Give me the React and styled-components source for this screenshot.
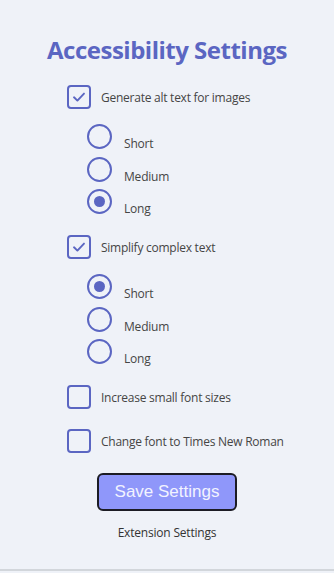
import React, {useState} from 'react';
import styled, {createGlobalStyle} from 'styled-components';

const Color = {
    PRIMARY: '#5b66c2',
    BG: '#eff2f8',
    TEXT: '#454545',
    BUTTON: '#8f97fa',
};

function App () {

    const [altText, setAltText] = useState(true);
    const [altLength, setAltLength] = useState('long');
    const [simplify, setSimplify] = useState(true);
    const [simplifyLength, setSimplifyLength] = useState('short');
    const [bigFont, setBigFont] = useState(false);
    const [times, setTimes] = useState(false);

    const lengths = [['short', 'Short'], ['medium', 'Medium'], ['long', 'Long']];

    return (
        <Container>
            <GlobalStyle/>
            <Title>Accessibility Settings</Title>
            <Options>
                <Check checked={altText} onClick={() => setAltText(!altText)} label="Generate alt text for images"/>
                <RadioGroup>
                    {lengths.map(([value, label]) => (
                        <Radio key={value}
                               checked={altLength === value}
                               onClick={() => setAltLength(value)}
                               label={label}
                        />
                    ))}
                </RadioGroup>
                <Check checked={simplify} onClick={() => setSimplify(!simplify)} label="Simplify complex text"/>
                <RadioGroup>
                    {lengths.map(([value, label]) => (
                        <Radio key={value}
                               checked={simplifyLength === value}
                               onClick={() => setSimplifyLength(value)}
                               label={label}
                        />
                    ))}
                </RadioGroup>
                <Check checked={bigFont} onClick={() => setBigFont(!bigFont)} label="Increase small font sizes"/>
                <Check checked={times} onClick={() => setTimes(!times)} label="Change font to Times New Roman" spaced/>
            </Options>
            <SaveButton>Save Settings</SaveButton>
            <Footer>Extension Settings</Footer>
        </Container>
    )
}

function Check ({checked, onClick, label, spaced}) {
    return (
        <CheckRow onClick={onClick} $spaced={spaced}>
            <Box>
                {checked && (
                    <svg width="16" height="16" viewBox="0 0 16 16">
                        <path d="M3 8.3 L6.4 11.6 L13 4.6" fill="none" stroke={Color.PRIMARY} strokeWidth="1.9"
                              strokeLinecap="round" strokeLinejoin="round"/>
                    </svg>
                )}
            </Box>
            <Label>{label}</Label>
        </CheckRow>
    )
}

function Radio ({checked, onClick, label}) {
    return (
        <RadioRow onClick={onClick}>
            <Circle>{checked && <Dot/>}</Circle>
            <RadioLabel>{label}</RadioLabel>
        </RadioRow>
    )
}

const GlobalStyle = createGlobalStyle`
    html, body {
        margin: 0;
        padding: 0;
        background: ${Color.BG};
    }
`;
const Container = styled.div`
    width: 334px;
    height: 571px;
    box-sizing: border-box;
    border-bottom: 2px solid #d2d6db;
    background: ${Color.BG};
    display: flex;
    flex-direction: column;
    align-items: center;
    padding-top: 35px;
    font-family: "Open Sans", "Noto Sans", sans-serif;
`;
const Title = styled.h1`
    margin: 0;
    font-size: 24px;
    font-weight: 700;
    line-height: 30px;
    color: ${Color.PRIMARY};
    letter-spacing: -0.5px;
`;
const Options = styled.div`
    align-self: stretch;
    display: flex;
    flex-direction: column;
    padding-left: 67px;
    margin-top: 20px;
`;
const CheckRow = styled.div`
    display: flex;
    align-items: center;
    gap: 10px;
    height: 24px;
    margin-top: ${props => props.$spaced ? '20px' : '0'};
    cursor: pointer;
`;
const Box = styled.div`
    width: 24px;
    height: 24px;
    flex-shrink: 0;
    box-sizing: border-box;
    border: 2px solid ${Color.PRIMARY};
    border-radius: 4px;
    display: flex;
    align-items: center;
    justify-content: center;
`;
const Label = styled.span`
    font-size: 12px;
    color: ${Color.TEXT};
    letter-spacing: -0.25px;
`;
const RadioGroup = styled.div`
    display: flex;
    flex-direction: column;
    gap: 8.5px;
    padding-left: 20px;
    margin: 15px 0 22px;
`;
const RadioRow = styled.div`
    display: flex;
    align-items: flex-start;
    gap: 12px;
    height: 24px;
    cursor: pointer;
`;
const Circle = styled.div`
    width: 25px;
    height: 25px;
    box-sizing: border-box;
    border: 2px solid ${Color.PRIMARY};
    border-radius: 50%;
    display: flex;
    align-items: center;
    justify-content: center;
    flex-shrink: 0;
`;
const Dot = styled.div`
    width: 11px;
    height: 11px;
    border-radius: 50%;
    background: ${Color.PRIMARY};
`;
const RadioLabel = styled.span`
    font-size: 12px;
    line-height: 16px;
    margin-top: 12px;
    color: ${Color.TEXT};
    letter-spacing: -0.2px;
`;
const SaveButton = styled.button`
    margin-top: 20px;
    width: 140px;
    height: 38px;
    box-sizing: border-box;
    background: ${Color.BUTTON};
    border: 2px solid #1c1c24;
    border-radius: 6px;
    color: #f2f3ff;
    font-family: "Liberation Sans", Arial, sans-serif;
    font-size: 17px;
    cursor: pointer;
`;
const Footer = styled.div`
    margin-top: 13px;
    font-size: 12px;
    color: #333;
    letter-spacing: -0.2px;
`;

export default App;
